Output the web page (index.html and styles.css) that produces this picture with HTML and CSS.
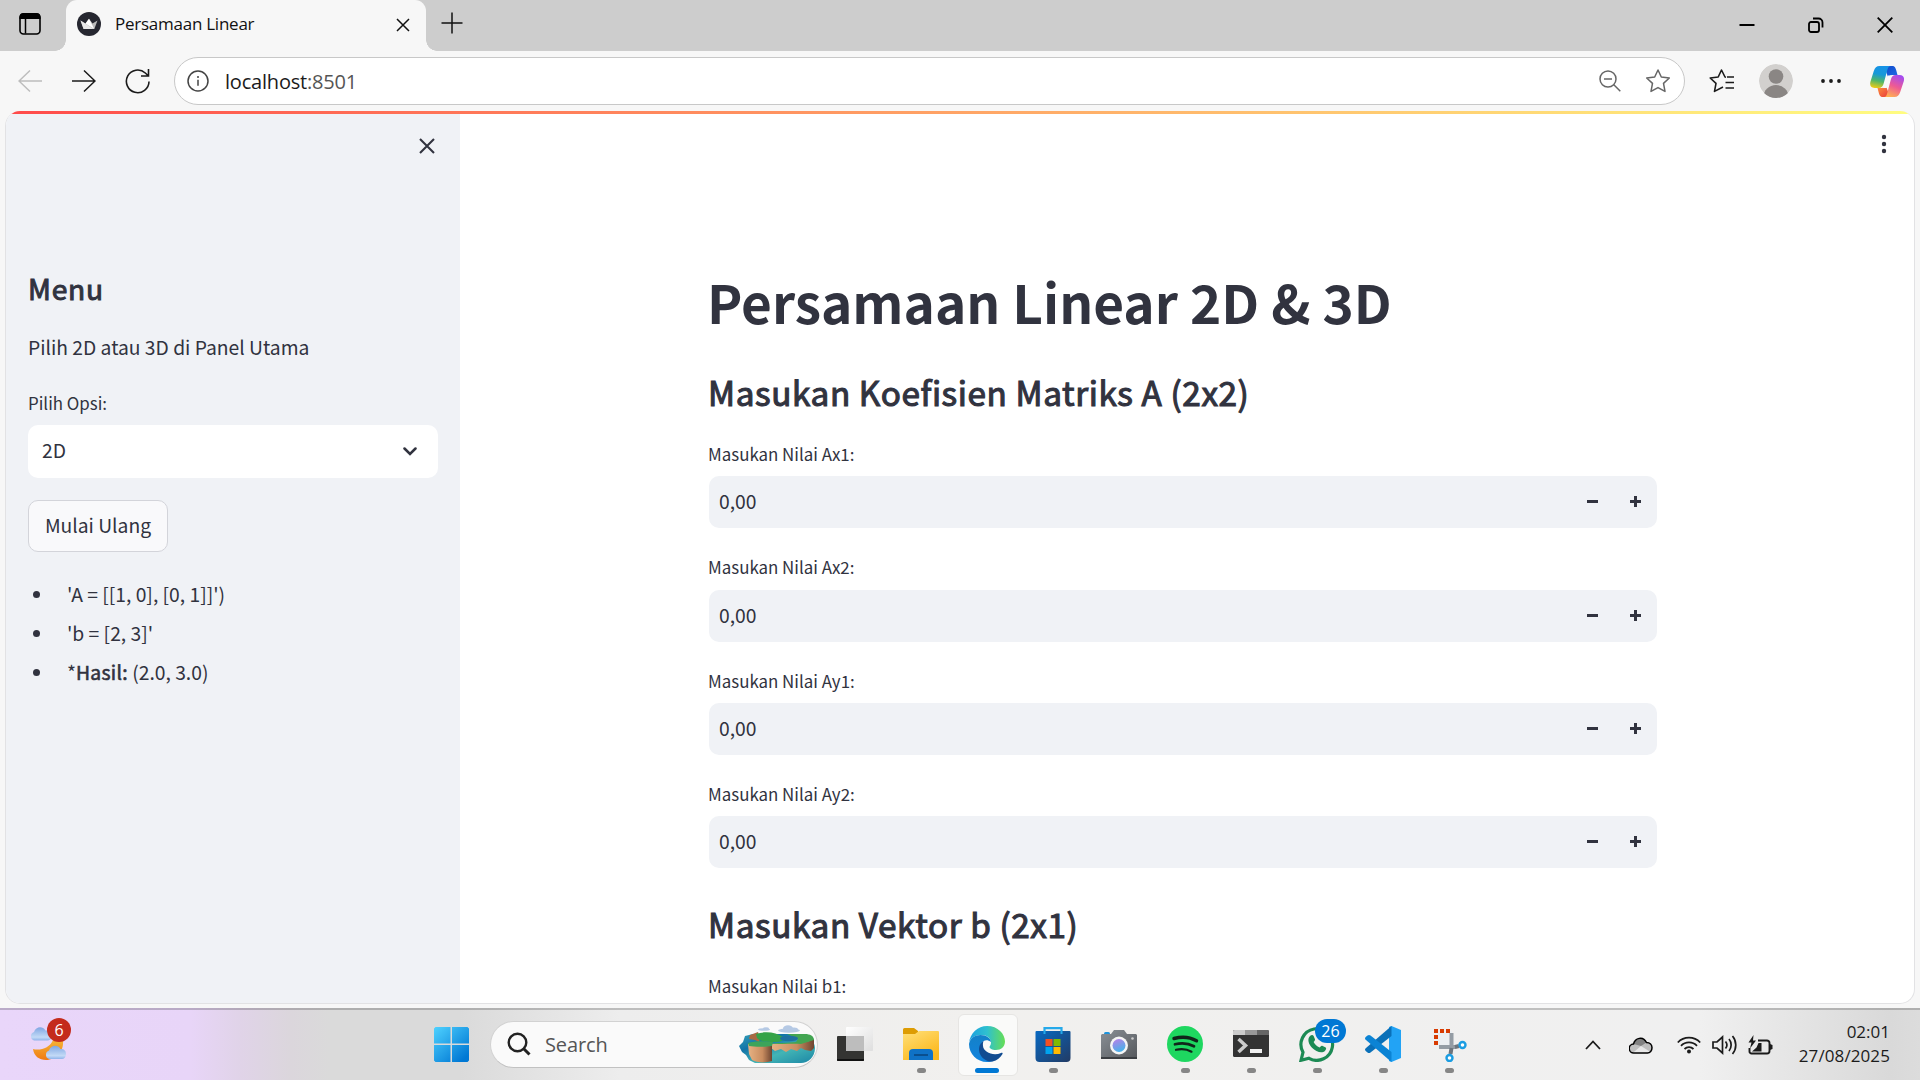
FILE: index.html
```html
<!DOCTYPE html>
<html lang="id">
<head>
<meta charset="utf-8">
<title>Persamaan Linear</title>
<link rel="stylesheet" href="styles.css">
</head>
<body>
<div class="desktop">
  <header class="titlebar">
    <button class="workspaces" aria-label="Workspaces">
      <svg width="24" height="24" viewBox="0 0 24 24"><rect x="2" y="2" width="20" height="20" rx="3.5" fill="none" stroke="#000" stroke-width="1.6"/><path d="M1.5 7V5a4 4 0 0 1 4-4h13a4 4 0 0 1 4 4v2z" fill="#000"/><path d="M7.5 6v15.500" stroke="#000" stroke-width="1.5"/></svg>
    </button>
    <div class="tab">
      <svg class="favicon" width="24" height="24" viewBox="0 0 24 24"><circle cx="12" cy="12" r="12" fill="#262730"/><path d="M3.500 8.500l5 3L12 6.700l3.500 4.800 5-3L17.300 17H6.600z" fill="#bbb"/><path d="M3.500 8.500l13 8.500H6.600z" fill="#e8e8e8"/><path d="M8.500 11.500L12 6.700l5.300 10.300z" fill="#fff"/></svg>
      <span class="tab-title">Persamaan Linear</span>
      <svg class="tab-close" width="14" height="14" viewBox="0 0 14 14"><path d="M1 1l12 12M13 1L1 13" stroke="#111" stroke-width="1.5"/></svg>
    </div>
    <svg class="new-tab" width="22" height="22" viewBox="0 0 22 22"><path d="M11 .5v21M.5 11h21" stroke="#111" stroke-width="1.5"/></svg>
    <div class="window-controls">
      <svg width="16" height="16" viewBox="0 0 16 16"><path d="M.5 8h15" stroke="#000" stroke-width="2"/></svg>
      <svg width="16" height="16" viewBox="0 0 16 16" fill="none" stroke="#000" stroke-width="1.800"><rect x="1" y="5" width="10" height="10" rx="2"/><path d="M5 1.500h5.500a4 4 0 0 1 4 4v5"/></svg>
      <svg width="16" height="16" viewBox="0 0 16 16"><path d="M.7.700l14.600 14.600M15.300.7L.7 15.300" stroke="#000" stroke-width="1.800"/></svg>
    </div>
  </header>

  <nav class="toolbar">
    <svg class="nav-icon" width="24" height="24" viewBox="0 0 24 24" fill="none" stroke="#bdbdbd" stroke-width="1.500"><path d="M24 12H1M12 1.500L1 12l11 10.500"/></svg>
    <svg class="nav-icon" width="24" height="24" viewBox="0 0 24 24" fill="none" stroke="#1b1b1b" stroke-width="1.500"><path d="M0 12h23M12 1.500L23 12 12 22.500"/></svg>
    <svg class="nav-icon" width="26" height="26" viewBox="0 0 26 26" fill="none" stroke="#1b1b1b" stroke-width="1.600"><path d="M24 13.500A11.300 11.300 0 1 1 20.300 5l2.700 2.500M23.500 1v7H16"/></svg>
    <div class="address">
      <svg width="22" height="22" viewBox="0 0 22 22"><circle cx="11" cy="11" r="10" fill="none" stroke="#444" stroke-width="1.500"/><path d="M11 9.800v6" stroke="#444" stroke-width="1.500"/><circle cx="11" cy="7" r="1" fill="#444"/></svg>
      <span class="url">localhost<span class="port">:8501</span></span>
      <svg class="zoom-out" width="22" height="22" viewBox="0 0 22 22" fill="none" stroke="#666" stroke-width="1.500"><circle cx="9" cy="9" r="8"/><path d="M5 9h8M14.800 14.800l6.500 6.500"/></svg>
      <svg class="star" width="26" height="26" viewBox="0 0 26 26" fill="none" stroke="#666" stroke-width="1.500" stroke-linejoin="round"><path d="M13 2l3.300 7 8 1-5.800 5.400 1.500 8L13 19.600 6 23.400l1.500-8L1.700 10l8-1z"/></svg>
    </div>
    <svg class="favorites" width="26" height="26" viewBox="0 0 26 26" fill="none" stroke="#1b1b1b" stroke-width="1.600" stroke-linejoin="round"><path d="M18 9h7M16.500 14.500H25M16.500 20H25M17 9.200l-1-.200L12.500 2 9.200 9l-8 1L7 15.400l-1.500 8L14 19"/></svg>
    <svg class="avatar" width="34" height="34" viewBox="0 0 34 34"><defs><clipPath id="av"><circle cx="17" cy="17" r="17"/></clipPath></defs><g clip-path="url(#av)"><circle cx="17" cy="17" r="17" fill="#d2d0ce"/><circle cx="17" cy="12.500" r="7.300" fill="#8a8684"/><ellipse cx="17" cy="33" rx="12.500" ry="12" fill="#8a8684"/></g></svg>
    <svg class="more" width="20" height="6" viewBox="0 0 20 6" fill="#1b1b1b"><circle cx="2" cy="3" r="1.900"/><circle cx="10" cy="3" r="1.900"/><circle cx="18" cy="3" r="1.900"/></svg>
    <svg class="copilot" width="34" height="31" viewBox="0 0 34 31">
      <defs>
        <linearGradient id="cpA" x1="0.400" y1="0" x2="0.200" y2="1"><stop offset="0" stop-color="#1793e6"/><stop offset=".35" stop-color="#1698d8"/><stop offset=".65" stop-color="#4db56b"/><stop offset="1" stop-color="#f5cc12"/></linearGradient>
        <linearGradient id="cpB" x1=".7" y1="0" x2=".3" y2="1"><stop offset="0" stop-color="#a44cf0"/><stop offset=".5" stop-color="#ee5a94"/><stop offset="1" stop-color="#ffb052"/></linearGradient>
        <linearGradient id="cpC" x1="0" y1="0" x2="1" y2="1"><stop offset="0" stop-color="#1047c8"/><stop offset="1" stop-color="#1f6ee8"/></linearGradient>
        <linearGradient id="cpD" x1="0" y1="0" x2="1" y2="1"><stop offset="0" stop-color="#ff9a3c"/><stop offset="1" stop-color="#e8343d"/></linearGradient>
      </defs>
      <path d="M14 0h8c3 0 3.500 2 4.300 4.500L27.500 9H22c-2 0-3 .800-3.600 3z" fill="url(#cpC)"/>
      <path d="M20 31h-7c-3 0-3.600-2-4.300-4.500L7.500 22H12c2 0 3-.8 3.600-3z" fill="url(#cpD)"/>
      <path d="M9.500 0H21c-2 0-3 1.500-3.600 3.700L13.800 17c-.900 3.500-2.300 5-5 5H4.500C.5 22-.5 19 .5 15.500L3.800 5C5 1.500 6.500 0 9.500 0z" fill="url(#cpA)"/>
      <path d="M24.500 31H14c2 0 2.600-1.500 3.200-3.700L20.700 14c.9-3.500 2.200-5 5-5h4c4 0 5 3 4 6.500L30.200 26c-1.200 3.500-2.700 5-5.700 5z" fill="url(#cpB)"/>
      <path d="M18 9.500h3.500c-1 1-1.500 2.500-2 4.200L16.700 22h-4c1-1 1.500-2.500 2-4.200z" fill="#f7f7f7"/>
    </svg>
  </nav>

  <div class="viewport">
    <div class="decoration"></div>
    <div class="app">
      <aside class="sidebar">
        <div class="sidebar-head"><svg width="16" height="16" viewBox="0 0 16 16"><path d="M1 1l14 14M15 1L1 15" stroke="#31333f" stroke-width="2.100"/></svg></div>
        <h2 class="menu-title">Menu</h2>
        <p class="menu-text">Pilih 2D atau 3D di Panel Utama</p>
        <div class="label option-label">Pilih Opsi:</div>
        <div class="select"><span>2D</span><svg width="14" height="9" viewBox="0 0 14 9"><path d="M1.500 1.500L7 7l5.500-5.500" fill="none" stroke="#31333f" stroke-width="2.500" stroke-linecap="round"/></svg></div>
        <button class="restart">Mulai Ulang</button>
        <ul class="notes">
          <li><span>'A = [[1, 0], [0, 1]]')</span></li>
          <li><span>'b = [2, 3]'</span></li>
          <li><span>*<strong>Hasil:</strong> (2.0, 3.0)</span></li>
        </ul>
      </aside>
      <main class="main">
        <h1 class="page-title">Persamaan Linear 2D &amp; 3D</h1>
        <h2 class="section-title first">Masukan Koefisien Matriks A (2x2)</h2>
        <div class="field"><div class="label">Masukan Nilai Ax1:</div><div class="number"><span>0,00</span><i class="minus"></i><i class="plus"></i></div></div>
        <div class="field"><div class="label">Masukan Nilai Ax2:</div><div class="number"><span>0,00</span><i class="minus"></i><i class="plus"></i></div></div>
        <div class="field"><div class="label">Masukan Nilai Ay1:</div><div class="number"><span>0,00</span><i class="minus"></i><i class="plus"></i></div></div>
        <div class="field"><div class="label">Masukan Nilai Ay2:</div><div class="number"><span>0,00</span><i class="minus"></i><i class="plus"></i></div></div>
        <h2 class="section-title second">Masukan Vektor b (2x1)</h2>
        <div class="label">Masukan Nilai b1:</div>
      </main>
      <svg class="kebab" width="6" height="20" viewBox="0 0 6 20" fill="#31333f"><circle cx="3" cy="3" r="2.200"/><circle cx="3" cy="10" r="2.200"/><circle cx="3" cy="17" r="2.200"/></svg>
    </div>
  </div>

  <footer class="taskbar">
    <div class="weather">
      <svg width="38" height="36" viewBox="0 0 38 36">
        <defs><linearGradient id="cl" x1="0" y1="0" x2="0" y2="1"><stop offset="0" stop-color="#7fa6e2"/><stop offset=".75" stop-color="#c3daf6"/><stop offset="1" stop-color="#8fb3ea"/></linearGradient><linearGradient id="mo" x1="0" y1="0" x2="0" y2="1"><stop offset="0" stop-color="#f5bc3c"/><stop offset="1" stop-color="#f07a12"/></linearGradient></defs>
        <path d="M3 24c7 2 17-1 20-9 2-4 8-3 10 1 1 10-7 19-17 19C9 35 4 31 3 24z" fill="url(#mo)"/>
        <path d="M4 15.500a4.500 4.500 0 0 1 0-8.500C6 1 13 1 15.500 5.500c4 0 6 2.500 6 5.500s-2 4.500-4 4.500z" fill="url(#cl)"/>
        <path d="M19 34a4.500 4.500 0 0 1 0-8.500c2-6 9-6 11.500-1.500 4 0 5.500 2 5.500 5s-2 5-4 5z" fill="url(#cl)"/>
      </svg>
      <span class="alert">6</span>
    </div>
    <svg class="start" width="35" height="35" viewBox="0 0 35 35"><defs><linearGradient id="win" gradientUnits="userSpaceOnUse" x1="0" y1="0" x2="30" y2="32"><stop offset="0" stop-color="#4fd2ff"/><stop offset="1" stop-color="#0078d4"/></linearGradient></defs><path d="M1.500 0H16.500V16.500H0V1.500zM18 0h15.500L35 1.500v15H18zM0 18h16.500v17h-15L0 33.500zM18 18h17v15.500L33.500 35H18z" fill="url(#win)"/></svg>
    <div class="search">
      <svg width="24" height="24" viewBox="0 0 24 24" fill="none" stroke="#222" stroke-width="2.400"><circle cx="10.500" cy="10.500" r="8.800"/><path d="M16.500 16.500l6 6" stroke-width="3"/></svg>
      <span>Search</span>
      <svg class="scene" width="76" height="39" viewBox="0 0 76 39">
        <defs><linearGradient id="sea" x1="0" y1="0" x2="1" y2="1"><stop offset="0" stop-color="#35a0b8"/><stop offset=".3" stop-color="#1273a8"/><stop offset=".6" stop-color="#43b5b5"/><stop offset="1" stop-color="#1a86a6"/></linearGradient><linearGradient id="rock" x1="0" y1="0" x2="1" y2="0"><stop offset="0" stop-color="#e8b283"/><stop offset=".6" stop-color="#c98d60"/><stop offset="1" stop-color="#6e4531"/></linearGradient></defs>
        <g fill="#b5c9e4"><ellipse cx="50" cy="5.500" rx="11" ry="2.200"/><ellipse cx="49" cy="3.500" rx="5" ry="3.300"/><ellipse cx="55" cy="4.500" rx="4" ry="2"/><ellipse cx="25" cy="4.500" rx="6" ry="1.300"/><ellipse cx="27" cy="3.500" rx="3" ry="1.300"/></g>
        <path d="M14 9h50c7 3 12 8 12 14 0 9-7 15-14 15H16l-6-3-3-5-4-3-3-6 4-4 2-6z" fill="url(#sea)"/>
        <path d="M32 19l36-2 7-3v9l-3 3-6-1-4-2-4 3-6-2-5 3-5-3-6 2-4-3z" fill="url(#rock)"/>
        <path d="M11 10l8-3 2 6-1 4-4-2-6-1z" fill="#a96a42"/>
        <path d="M17 9c9-3 20-2 27 3 2 3-2 5-8 5-8 0-16-1-18-4z" fill="#35a348"/>
        <path d="M32 18c9 2 20 0 30 1l13-4c0-4-4-6-9-6H48l11 5-2 3-12 1z" fill="#43a552"/><ellipse cx="50" cy="13.500" rx="9" ry="2.700" fill="#1f70a0"/>
        <path d="M9 19h24v17c-6 2-15 2-20-1l-3-6z" fill="url(#rock)"/><path d="M9 18c5-2 18-2 25-1l-1 4c-7 1-17 1-23 0z" fill="#3ca45a"/>
      </svg>
    </div>
    <div class="apps">
      <div class="app-cell"><svg width="36" height="36" viewBox="0 0 36 36"><defs><linearGradient id="tvw" x1="0" y1="0" x2="1" y2="1"><stop offset="0" stop-color="#fff"/><stop offset="1" stop-color="#dedede"/></linearGradient></defs><rect y="10" width="27" height="25" rx="1" fill="#343432"/><path d="M0 33h27v1a1 1 0 0 1-1 1H1a1 1 0 0 1-1-1z" fill="#111"/><rect x="9" y="1" width="27" height="24" rx="1" fill="url(#tvw)"/><path d="M9 10h18v15H9z" fill="#bdbdbd"/></svg></div>
      <div class="app-cell running"><svg width="36" height="36" viewBox="0 0 36 36"><defs><linearGradient id="fld" x1="0" y1="0" x2=".6" y2="1"><stop offset="0" stop-color="#ffe07a"/><stop offset="1" stop-color="#fcb81c"/></linearGradient></defs><path d="M0 3.500A1.500 1.500 0 0 1 1.500 2H11l4 3v6H0z" fill="#dd9c04"/><path d="M0 8h12l4-3h19a1 1 0 0 1 1 1v28H0z" fill="url(#fld)"/><path d="M6 34v-7a4 4 0 0 1 4-4h16a4 4 0 0 1 4 4v7z" fill="#0f72c6"/><path d="M11 29h14" stroke="#0a4f8e" stroke-width="2"/></svg></div>
      <div class="app-cell running active"><svg width="36" height="36" viewBox="0 0 36 36"><defs><linearGradient id="ed1" x1="0" y1=".5" x2="1" y2=".5"><stop offset="0" stop-color="#1b9fe0"/><stop offset=".5" stop-color="#2fc0cf"/><stop offset="1" stop-color="#66de55"/></linearGradient><linearGradient id="ed2" x1="0" y1="0" x2="0" y2="1"><stop offset="0" stop-color="#1481c8"/><stop offset="1" stop-color="#1283de"/></linearGradient></defs><path d="M0 17C1 7 9 0 18 0c11 0 18 8 18 15.500 0 5-4 8.500-9 8.500-4 0-6.500-1.500-6.500-3 0-1 1.500-1.500 1.500-4.500 0-4-4-7.500-10-7.500C6 9 1 12.500 0 17z" fill="url(#ed1)"/><path d="M0 18C1 12 6 9 11.500 9c6 0 10.500 3.500 10.500 7-6-5-12 1-10.500 8 1.300 6 7 11 13.500 10.500C23 35.500 20.500 36 18 36 8 36 0 28 0 18z" fill="url(#ed2)"/><path d="M14.500 15C10 18 9 23 11 28c2 4.500 7 8 12.500 7.500C28 34.500 31.500 31.500 33.500 28c.5-1-.5-1.500-1.500-1-8 3.500-17.500-1-18-7-.200-2 0-3.500.500-5z" fill="#114b91"/></svg></div>
      <div class="app-cell running"><svg width="36" height="36" viewBox="0 0 36 36"><defs><linearGradient id="sto" x1="0" y1="0" x2="1" y2="1"><stop offset="0" stop-color="#0869c2"/><stop offset="1" stop-color="#223b64"/></linearGradient></defs><path d="M9.500 8V2.200h17V8" fill="none" stroke="#25a9ea" stroke-width="2.200"/><path d="M.5 6A1 1 0 0 1 1.500 5h33a1 1 0 0 1 1 1v26a4 4 0 0 1-4 4H4.500a4 4 0 0 1-4-4z" fill="url(#sto)"/><path d="M9.500 5v3M26.500 5v3" stroke="#25a9ea" stroke-width="2"/><path d="M10.500 13h7v7h-7z" fill="#f25022"/><path d="M18.500 13h7v7h-7z" fill="#7fba00"/><path d="M10.500 21h7v7h-7z" fill="#00a4ef"/><path d="M18.500 21h7v7h-7z" fill="#ffb900"/></svg></div>
      <div class="app-cell"><svg width="36" height="36" viewBox="0 0 36 36"><defs><linearGradient id="len" x1="0.300" y1="0" x2=".7" y2="1"><stop offset="0" stop-color="#b383e8"/><stop offset="1" stop-color="#3fb5ea"/></linearGradient><linearGradient id="cam" x1="0" y1="0" x2="1" y2="1"><stop offset="0" stop-color="#8a9096"/><stop offset="1" stop-color="#55585c"/></linearGradient></defs><rect x="3" y="6" width="6" height="4" rx="1.500" fill="#1c93dc"/><path d="M0 9l1-1h9l3-4h10l3 4h9l1 1v24H0z" fill="url(#cam)"/><path d="M0 31h36v2H0z" fill="#3b3e42"/><circle cx="18" cy="19.500" r="9" fill="#f5f5f5"/><circle cx="18" cy="19.500" r="6.500" fill="url(#len)"/><circle cx="31.500" cy="12.500" r="1.300" fill="#ccc"/></svg></div>
      <div class="app-cell running"><svg width="36" height="36" viewBox="0 0 36 36"><circle cx="18" cy="18" r="18" fill="#1ed760"/><g fill="none" stroke="#10251a" stroke-linecap="round"><path d="M7 12.500c7.500-2 16-1.500 22.500 2.300" stroke-width="3.400"/><path d="M8 18.300c6.500-1.700 13.500-1 19 2" stroke-width="2.700"/><path d="M9 23.800c5.500-1.300 11-.700 15.500 1.900" stroke-width="2.200"/></g></svg></div>
      <div class="app-cell running"><svg width="36" height="36" viewBox="0 0 36 36"><rect y="4" width="36" height="27" rx="1.500" fill="#333"/><path d="M0 9V5.500A1.500 1.500 0 0 1 1.500 4H12v5z" fill="#ccc"/><path d="M12 4h12v5H12z" fill="#999"/><path d="M24 4h10.500A1.500 1.500 0 0 1 36 5.500V9H24z" fill="#666"/><path d="M5.500 13l7 6.500-7 6.500" fill="none" stroke="#ccc" stroke-width="3.500"/><path d="M17 23h12v4H17z" fill="#f0f0f0"/></svg></div>
      <div class="app-cell running"><svg width="36" height="36" viewBox="0 0 36 36"><path d="M2 34.300l2-8A15.800 15.800 0 1 1 10 32.300z" fill="none" stroke="#1c8a54" stroke-width="3.200"/><path d="M11 10c1.500-1.500 3-1.300 3.600 0l1.400 3.300c.3 1-.8 2-1.400 2.800 1.400 2.700 3.200 4.300 6 5.500.8-.8 1.500-2.200 2.600-1.800l3.500 1.700c1.200.8-.3 4-2.500 4.600-3.500 1-8-1-11.200-4.300C9.500 18 8 13 11 10z" fill="#1c8a54"/></svg><span class="count">26</span></div>
      <div class="app-cell running"><svg width="36" height="36" viewBox="0 0 36 36"><path d="M26.500 0L36 4v28l-9.500 4L24 35V1z" fill="#22a3f5"/><path d="M26.500 0v10L5.500 26.500c-1 .700-2 .7-3 0L.7 25c-.9-.800-.9-2 0-2.800z" fill="#0a70b8"/><path d="M26.500 36V26L5.500 9.500c-1-.7-2-.7-3 0L.7 11c-.9.8-.9 2 0 2.800z" fill="#0b83d4"/></svg></div>
      <div class="app-cell running"><svg width="36" height="36" viewBox="0 0 36 36"><rect x="4" y="5" width="17" height="16" fill="#eceff2"/><path d="M5 19V5h15" fill="none" stroke="#d83b01" stroke-width="4" stroke-dasharray="4 2"/><path d="M8 21h17M20.500 7v16" stroke="#949ca4" stroke-width="4" fill="none"/><path d="M20.500 22l-1 6M24 21l4-1" stroke="#6d757d" stroke-width="4"/><circle cx="18.500" cy="32" r="3" fill="#fff" stroke="#1b9de2" stroke-width="2.400"/><circle cx="31.500" cy="19" r="3" fill="#fff" stroke="#1b9de2" stroke-width="2.400"/></svg></div>
    </div>
    <div class="tray">
      <svg class="chevron" width="16" height="10" viewBox="0 0 16 10"><path d="M1 9l7-7.500L15 9" fill="none" stroke="#1b1b1b" stroke-width="1.800"/></svg>
      <svg class="cloud" width="24" height="17" viewBox="0 0 24 17"><path d="M5 16a4.500 4.500 0 0 1-.5-9C6 1 14-1.500 17.500 5.500c3.500 0 5.500 2.500 5.500 5.300S21 16 18.500 16z" fill="#bfbfbf"/><path d="M4.500 7C6 1 14-1.500 17.500 5.500L12 9z" fill="#828282"/><path d="M5 16a5 5 0 0 1-1-.300L12 9l9.500 6L18.500 16z" fill="#e8e8e8"/><path d="M5 16a4.500 4.500 0 0 1-.5-9C6 1 14-1.500 17.500 5.500c3.500 0 5.500 2.500 5.500 5.300S21 16 18.500 16z" fill="none" stroke="#000" stroke-width="1.500"/></svg>
      <svg class="wifi" width="24" height="18" viewBox="0 0 24 18" fill="none" stroke="#1b1b1b" stroke-width="1.800"><path d="M.8 6.500a15.500 15.500 0 0 1 22.400 0M4 9.800a11 11 0 0 1 16 0M7.500 13a6.500 6.500 0 0 1 9 0"/><circle cx="12" cy="15.500" r="2" fill="#1b1b1b" stroke="none"/></svg>
      <svg class="sound" width="25" height="20" viewBox="0 0 25 20" fill="none" stroke="#1b1b1b" stroke-width="1.700"><path d="M1 7h4l5.500-5v16L5 13H1zM13.500 6.500a5.500 5.500 0 0 1 0 7M17 4a9.500 9.500 0 0 1 0 12M20.500 1a14 14 0 0 1 0 18"/></svg>
      <svg class="battery" width="25" height="20" viewBox="0 0 25 20"><path d="M10 5.500h9A2.500 2.500 0 0 1 21.500 8v8a2.500 2.500 0 0 1-2.500 2.500H3.500A2 2 0 0 1 1.500 16.500V13" fill="none" stroke="#1b1b1b" stroke-width="1.900"/><path d="M22 9l2.500 1v4L22 15z" fill="#1b1b1b"/><path d="M4 16.500l4.500-4 2-4.500h3v8.500z" fill="#1b1b1b"/><path d="M5.500 0L.5 7.500h3L2 13.500 8 5.500H5z" fill="#1b1b1b"/></svg>
      <div class="clock"><span class="time">02:01</span><span class="date">27/08/2025</span></div>
    </div>
  </footer>
</div>
</body>
</html>
```
FILE: styles.css
```css
* { box-sizing: border-box; }
body { margin: 0; }

.desktop {
  width: 1920px;
  height: 1080px;
  overflow: hidden;
  display: flex;
  flex-direction: column;
  background: #f7f7f7;
  font-family: "Open Sans", sans-serif;
  color: #1b1b1b;
}
svg { display: block; flex: none; }
button { font: inherit; color: inherit; margin: 0; padding: 0; border: 0; background: none; }

/* Tab strip */
.titlebar { height: 51px; flex: none; display: flex; background: #cdcdcd; }
.workspaces { width: 66px; padding: 12px 0 0 18px; display: flex; align-items: flex-start; }
.tab {
  position: relative;
  width: 360px;
  height: 51px;
  display: flex;
  align-items: center;
  padding: 0 16px 3px 11px;
  background: #f7f7f7;
  border-radius: 11px 11px 0 0;
}
.tab::before, .tab::after {
  content: "";
  position: absolute;
  bottom: 0;
  width: 11px;
  height: 11px;
}
.tab::before { left: -11px; background: radial-gradient(circle at 0 0, #cdcdcd 10.500px, #f7f7f7 11px); }
.tab::after { right: -11px; background: radial-gradient(circle at 100% 0, #cdcdcd 10.500px, #f7f7f7 11px); }
.tab-title { flex: 1; padding: 0 0 2px 14px; font-size: 17px; letter-spacing: -0.250px; color: #111; white-space: nowrap; }
.tab-close { margin-top: 2px; }
.new-tab { margin: 12px 0 0 15px; }
.window-controls { margin-left: auto; display: flex; gap: 53px; padding: 17px 27px 0 0; }

/* Toolbar */
.toolbar { height: 60px; flex: none; display: flex; align-items: center; padding: 0 16px 0 18px; }
.nav-icon { margin-right: 30px; }
.nav-icon + .nav-icon { margin-right: 29px; }
.nav-icon + .nav-icon + .nav-icon { margin-right: 23px; }
.address {
  flex: 1;
  height: 48px;
  display: flex;
  align-items: center;
  padding: 0 13px 0 12px;
  background: #fff;
  border: 1px solid #c8c8c8;
  border-radius: 24px;
}
.url { flex: 1; padding-left: 16px; font-size: 20px; letter-spacing: -0.200px; color: #1b1b1b; }
.port { color: #555; }
.star { margin-left: 24px; }
.favorites { margin-left: 24px; }
.avatar { margin-left: 24px; }
.more { margin-left: 28px; }
.copilot { margin-left: 29px; }

/* Page frame */
.viewport {
  width: 1910px;
  height: 893px;
  flex: none;
  margin-left: 5px;
  overflow: hidden;
  display: flex;
  flex-direction: column;
  background: #fff;
  border: 1px solid #e2e2e4;
  border-top: 0;
  border-radius: 15px;
}
.decoration { height: 3px; flex: none; background: linear-gradient(90deg, #ff4b4b, #fffd80); }
.app {
  position: relative;
  flex: 1;
  display: flex;
  font-family: "Noto Sans CJK SC", sans-serif;
  font-size: 19.300px;
  color: #31333f;
}
.sidebar { width: 454px; flex: none; padding: 0 22px; background: #f0f2f6; }
.sidebar-head { display: flex; justify-content: flex-end; padding: 24px 3px 0 0; height: 149px; }
h1, h2, p, ul { margin: 0; padding: 0; }
.menu-title { font-size: 28.200px; line-height: 50px; font-weight: 400; letter-spacing: .8px; -webkit-text-stroke: 1px #31333f; }
.menu-text { margin-top: 18px; line-height: 32px; white-space: nowrap; }
.label { font-size: 16.900px; line-height: 28px; white-space: nowrap; }
.option-label { margin-top: 26px; }
.select {
  margin-top: 8px;
  height: 53px;
  display: flex;
  align-items: center;
  justify-content: space-between;
  padding: 0 21px 0 14px;
  background: #fff;
  border-radius: 10px;
}
.select span { padding-bottom: 3px; }
.restart {
  display: block;
  width: 140px;
  height: 52px;
  margin-top: 22px;
  padding-bottom: 3px;
  background: #f9f9fb;
  border: 1px solid #d3d4da;
  border-radius: 10px;
  white-space: nowrap;
}
.notes { margin-top: 23px; list-style: none; }
.notes li { display: flex; align-items: center; height: 39px; white-space: nowrap; }
.notes li::before { content: ""; width: 7px; height: 7px; margin: 0 27px 0 5px; border-radius: 50%; background: #31333f; }
.notes span { padding-bottom: 2px; }
.notes strong { font-weight: 400; -webkit-text-stroke: .6px #31333f; letter-spacing: .3px; }

.main { flex: 1; padding: 152px 257px 0 248px; }
.page-title { font-size: 53.100px; line-height: 70px; font-weight: 700; margin-left: -1px; white-space: nowrap; }
.section-title { font-size: 33.300px; line-height: 50px; font-weight: 400; letter-spacing: .590px; -webkit-text-stroke: 1.100px #31333f; white-space: nowrap; }
.first { margin: 31px 0 23px; }
.second { margin: 6px 0 23px; }
.field { height: 113.300px; }
.number {
  height: 52px;
  margin: 8.400px 0 0 1px;
  display: flex;
  align-items: center;
  padding: 0 16px 0 10px;
  background: #f0f2f6;
  border-radius: 10px;
}
.number span { flex: 1; padding-bottom: 2px; }
.minus, .plus { width: 11px; height: 11px; margin-bottom: 1px; background: linear-gradient(#31333f, #31333f) center / 11px 3px no-repeat; }
.plus { margin-left: 32px; background: linear-gradient(#31333f, #31333f) center / 11px 3px no-repeat, linear-gradient(#31333f, #31333f) center / 3px 11px no-repeat; }
.kebab { position: absolute; right: 27px; top: 20px; }

/* Taskbar */
.taskbar {
  height: 72px;
  flex: none;
  margin-top: 4px;
  display: flex;
  align-items: center;
  padding-right: 30px;
  border-top: 2px solid rgba(0, 0, 0, .2);
  background: linear-gradient(90deg, #e9d6fa 0, #e8d5f8 190px, #e0d3e8 240px, #dbd6dc 290px, #dadada 330px, #dadada 460px, #ededed 620px, #f1f0ee 980px, #f0f0f0 1700px, #d9d9d9 1890px, #dcdcdc 100%) border-box;
}
.weather { position: relative; width: 434px; height: 70px; padding: 15px 0 0 30px; flex: none; }
.alert {
  position: absolute;
  left: 47px;
  top: 8px;
  width: 24px;
  height: 24px;
  border-radius: 50%;
  background: #c42b1c;
  color: #fff;
  font-size: 16px;
  line-height: 24px;
  text-align: center;
}
.start { margin-top: -1px; }
.search {
  width: 328px;
  height: 47px;
  margin: -2px 0 0 21px;
  display: flex;
  align-items: center;
  padding: 0 2px 0 16px;
  background: #fafafa;
  border: 1.500px solid #d2d2d2;
  border-bottom-color: #c2c2c2;
  border-radius: 24px;
}
.search span { flex: 1; padding-left: 14px; font-size: 20px; letter-spacing: -0.100px; color: #555; }
.apps { display: flex; margin-left: 4px; }
.app-cell { position: relative; width: 66px; height: 70px; display: flex; justify-content: center; padding-top: 16px; }
.app-cell svg { position: relative; }
.running::after {
  content: "";
  position: absolute;
  left: 29px;
  top: 58px;
  width: 9px;
  height: 5px;
  border-radius: 3px;
  background: #868686;
}
.active::before {
  content: "";
  position: absolute;
  left: 4px;
  top: 4px;
  width: 58px;
  height: 60px;
  border: 1.500px solid #e6e5e3;
  border-radius: 6px;
  background: #fafaf9;
}
.active::after { left: 21px; width: 24px; background: #0078d4; }
.count {
  position: absolute;
  left: 31px;
  top: 9px;
  width: 31px;
  height: 24px;
  border-radius: 12px;
  background: #0078d4;
  color: #fff;
  font-size: 16px;
  line-height: 24px;
  text-align: center;
}
.tray { margin-left: auto; display: flex; align-items: center; }
.cloud { margin-left: 28px; }
.wifi { margin-left: 24px; }
.sound { margin-left: 11px; }
.battery { margin-left: 11px; }
.clock { width: 117px; padding-bottom: 2px; display: flex; flex-direction: column; align-items: flex-end; font-size: 17px; line-height: 24px; }
.date { letter-spacing: .1px; }
```
